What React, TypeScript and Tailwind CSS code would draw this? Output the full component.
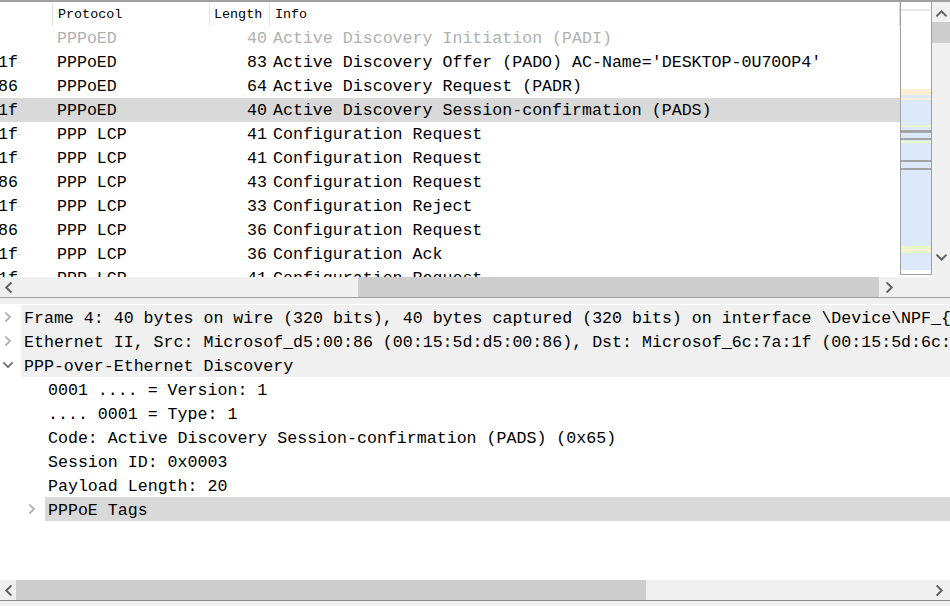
import React from "react";

type Dir = "left" | "right" | "up" | "down";

function Chev({ dir, color, size = 10, sw = 1.6 }: { dir: Dir; color: string; size?: number; sw?: number }) {
  const pts: Record<Dir, string> = {
    right: "3,1 7,5 3,9",
    left: "7,1 3,5 7,9",
    up: "1,7 5,3 9,7",
    down: "1,3 5,7 9,3",
  };
  return (
    <svg width={size} height={size} viewBox="0 0 10 10" className="block">
      <polyline points={pts[dir]} fill="none" stroke={color} strokeWidth={sw} strokeLinecap="square" strokeLinejoin="miter" />
    </svg>
  );
}

const rows: { dst: string; proto: string; len: string; info: string; dim?: boolean; sel?: boolean }[] = [
  { dst: "", proto: "PPPoED", len: "40", info: "Active Discovery Initiation (PADI)", dim: true },
  { dst: "1f", proto: "PPPoED", len: "83", info: "Active Discovery Offer (PADO) AC-Name='DESKTOP-0U70OP4'" },
  { dst: "86", proto: "PPPoED", len: "64", info: "Active Discovery Request (PADR)" },
  { dst: "1f", proto: "PPPoED", len: "40", info: "Active Discovery Session-confirmation (PADS)", sel: true },
  { dst: "1f", proto: "PPP LCP", len: "41", info: "Configuration Request" },
  { dst: "1f", proto: "PPP LCP", len: "41", info: "Configuration Request" },
  { dst: "86", proto: "PPP LCP", len: "43", info: "Configuration Request" },
  { dst: "1f", proto: "PPP LCP", len: "33", info: "Configuration Reject" },
  { dst: "86", proto: "PPP LCP", len: "36", info: "Configuration Request" },
  { dst: "1f", proto: "PPP LCP", len: "36", info: "Configuration Ack" },
  { dst: "1f", proto: "PPP LCP", len: "41", info: "Configuration Request" },
];

const stripes: [number, string][] = [
  [7, "#ffffff"],
  [2, "#eaeaea"],
  [78, "#ffffff"],
  [6, "#fdefd3"],
  [3, "#dbe9fb"],
  [2, "#fdefd3"],
  [25, "#dbe9fb"],
  [2, "#e5f8c6"],
  [3, "#dbe9fb"],
  [3, "#a4a4a4"],
  [5, "#dbe9fb"],
  [2, "#a4a4a4"],
  [1, "#dbe9fb"],
  [2, "#e5f8c6"],
  [17, "#dbe9fb"],
  [2, "#a4a4a4"],
  [6, "#dbe9fb"],
  [2, "#a4a4a4"],
  [76, "#dbe9fb"],
  [3, "#e5f8c6"],
  [2, "#fdefd3"],
  [2, "#e5f8c6"],
  [17, "#dbe9fb"],
  [4, "#ffffff"],
];

type TreeRow = { indent: number; arrow?: "right" | "down"; text: string; bg?: string; arrowColor?: string };

const tree: TreeRow[] = [
  { indent: 0, arrow: "right", text: "Frame 4: 40 bytes on wire (320 bits), 40 bytes captured (320 bits) on interface \\Device\\NPF_{", bg: "bg-[#f0f0f0]" },
  { indent: 0, arrow: "right", text: "Ethernet II, Src: Microsof_d5:00:86 (00:15:5d:d5:00:86), Dst: Microsof_6c:7a:1f (00:15:5d:6c:7a:1f)", bg: "bg-[#f0f0f0]" },
  { indent: 0, arrow: "down", text: "PPP-over-Ethernet Discovery", bg: "bg-[#f0f0f0]", arrowColor: "#6a6a6a" },
  { indent: 1, text: "0001 .... = Version: 1" },
  { indent: 1, text: ".... 0001 = Type: 1" },
  { indent: 1, text: "Code: Active Discovery Session-confirmation (PADS) (0x65)" },
  { indent: 1, text: "Session ID: 0x0003" },
  { indent: 1, text: "Payload Length: 20" },
  { indent: 1, arrow: "right", text: "PPPoE Tags", bg: "bg-[#d9d9d9]" },
];

export default function App() {
  return (
    <div className="w-[950px] h-[606px] bg-white overflow-hidden flex flex-col font-['Liberation_Mono',monospace] text-black">
      {/* Top pane */}
      <div className="h-[277px] flex border-t-2 border-[#a0a0a0] shrink-0">
        <div className="w-[900px] flex flex-col overflow-hidden">
          <div className="h-[24px] shrink-0 flex text-[13.4px] leading-[26px] border-r border-[#d8d8d8] overflow-hidden">
            <div className="w-[53px] border-r border-[#e5e5e5]" />
            <div className="w-[157px] pl-[5px] border-r border-[#e5e5e5]">Protocol</div>
            <div className="w-[60px] pl-[4px] border-r border-[#e5e5e5]">Length</div>
            <div className="flex-1 pl-[5px]">Info</div>
          </div>
          <div className="flex-1 overflow-hidden text-[16.62px] leading-[26px]">
            {rows.map((r, i) => (
              <div
                key={i}
                className={`h-[24px] flex whitespace-nowrap overflow-hidden ${r.sel ? "bg-[#d9d9d9]" : ""} ${r.dim ? "text-[#b0b0b0]" : ""}`}
              >
                <div className="w-[53px] overflow-hidden">
                  <span className="block ml-[-2px]">{r.dst}</span>
                </div>
                <div className="w-[157px] pl-[4px]">{r.proto}</div>
                <div className="w-[60px] text-right pr-[3px]">{r.len}</div>
                <div className="flex-1 pl-[3px]">{r.info}</div>
              </div>
            ))}
          </div>
        </div>
        {/* minimap */}
        <div className="w-[32px] border-x border-b border-[#a0a0a0] flex flex-col h-[273px]">
          {stripes.map(([h, c], i) => (
            <div key={i} className="w-full shrink-0" style={{ height: h, backgroundColor: c }} />
          ))}
        </div>
        {/* vertical scrollbar */}
        <div className="w-[18px] bg-[#f0f0f0] flex flex-col items-center">
          <div className="h-[20px] flex items-center justify-center pt-[2px]">
            <Chev dir="up" color="#606060" size={11} sw={1.8} />
          </div>
          <div className="w-full h-[21px] bg-[#cdcdcd]" />
          <div className="flex-1" />
          <div className="h-[18px] flex items-start justify-center mb-[7px]">
            <Chev dir="down" color="#606060" size={11} sw={1.8} />
          </div>
        </div>
      </div>
      {/* top hscroll */}
      <div className="h-[20px] flex shrink-0 bg-[#f0f0f0]">
        <div className="w-[900px] flex">
          <div className="w-[16px] flex items-center justify-center">
            <Chev dir="left" color="#606060" size={11} sw={1.8} />
          </div>
          <div className="w-[342px]" />
          <div className="w-[521px] bg-[#cdcdcd]" />
          <div className="w-[21px] flex items-center justify-center">
            <Chev dir="right" color="#606060" size={11} sw={1.8} />
          </div>
        </div>
        <div className="flex-1" />
      </div>
      {/* splitter */}
      <div className="h-[7px] shrink-0 border-t border-[#a0a0a0] bg-[#f0f0f0]" />
      {/* detail pane */}
      <div className="h-[276px] shrink-0 overflow-hidden pt-[1px] text-[16.62px] leading-[28px]">
        {tree.map((t, i) => (
          <div key={i} className="h-[24px] flex whitespace-nowrap overflow-hidden" style={{ paddingLeft: t.indent * 24 }}>
            <div className="w-[21px] shrink-0 flex items-center pl-[3px]">
              {t.arrow ? <Chev dir={t.arrow} color={t.arrowColor ?? "#a8a8a8"} size={10} sw={1.6} /> : null}
            </div>
            <div className={`flex-1 pl-[3px] overflow-hidden ${t.bg ?? ""}`}>{t.text}</div>
          </div>
        ))}
      </div>
      {/* bottom hscroll */}
      <div className="h-[20px] shrink-0 flex bg-[#f0f0f0]">
        <div className="w-[16px] flex items-center justify-center">
          <Chev dir="left" color="#606060" size={11} sw={1.8} />
        </div>
        <div className="w-[630px] bg-[#cdcdcd]" />
        <div className="flex-1" />
        <div className="w-[21px] flex items-center justify-center">
          <Chev dir="right" color="#606060" size={11} sw={1.8} />
        </div>
      </div>
      <div className="flex-1 border-t border-[#8a8a8a] bg-[#f0f0f0]" />
    </div>
  );
}
